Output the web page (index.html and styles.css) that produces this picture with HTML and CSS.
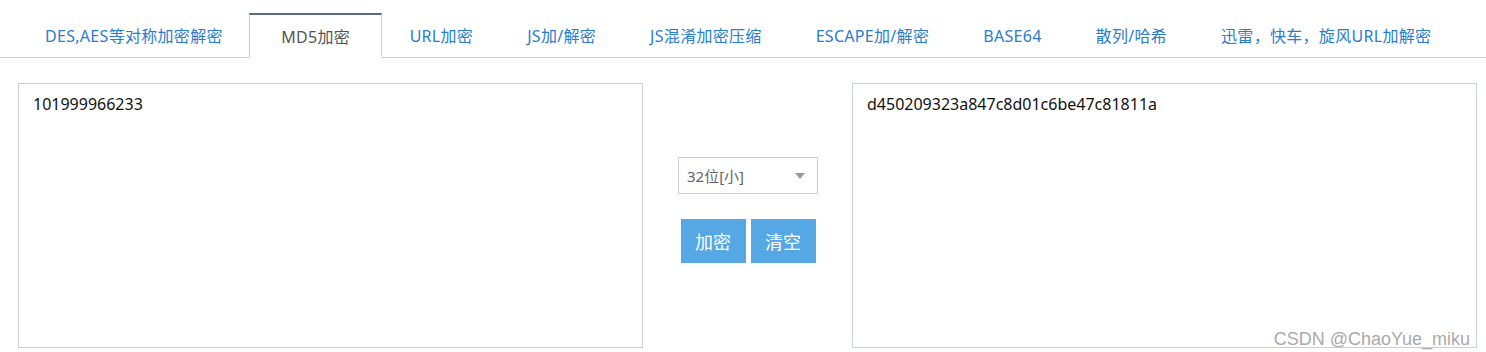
FILE: index.html
```html
<!DOCTYPE html>
<html lang="zh-CN">
<head>
    <meta charset="UTF-8">
    <meta name="viewport" content="width=device-width, initial-scale=1.0">
    <title>MD5加密</title>
    <link rel="stylesheet" href="styles.css">
</head>
<body>
    <ul class="tabs">
        <li><a href="#">DES,AES等对称加密解密</a></li>
        <li class="active"><a href="#">MD5加密</a></li>
        <li><a href="#">URL加密</a></li>
        <li><a href="#">JS加/解密</a></li>
        <li><a href="#">JS混淆加密压缩</a></li>
        <li><a href="#">ESCAPE加/解密</a></li>
        <li><a href="#">BASE64</a></li>
        <li><a href="#">散列/哈希</a></li>
        <li><a href="#">迅雷，快车，旋风URL加解密</a></li>
    </ul>

    <div class="tool">
        <textarea class="box" id="source">101999966233</textarea>
        <div class="middle">
            <div class="select-wrap">
                <select id="bits">
                    <option>32位[小]</option>
                    <option>32位[大]</option>
                    <option>16位[小]</option>
                    <option>16位[大]</option>
                </select>
            </div>
            <div class="buttons">
                <button>加密</button>
                <button>清空</button>
            </div>
        </div>
        <textarea class="box" id="result">d450209323a847c8d01c6be47c81811a</textarea>
    </div>

    <div class="watermark">CSDN @ChaoYue_miku</div>
</body>
</html>
```

FILE: styles.css
```css
body {
    margin: 0;
    padding-top: 13px;
    font-family: "Noto Sans", "Noto Sans CJK SC", sans-serif;
    font-size: 16px;
    color: #333;
    background-color: #fff;
    position: relative;
    height: 339px;
    overflow: hidden;
}
.tabs {
    list-style: none;
    margin: 0;
    padding: 0 0 0 17.5px;
    display: flex;
    border-bottom: 1px solid #c8cfdb;
    height: 44px;
}
.tabs li {
    height: 44px;
    margin-bottom: -1px;
}
.tabs a {
    display: block;
    padding: 0 26.5px 0 27.5px;
    line-height: 46px;
    letter-spacing: 0.3px;
    color: #2a7ccf;
    text-decoration: none;
}
.tabs li.active {
    border: 1px solid #c8cfdb;
    border-top: 2px solid #5b6a84;
    border-bottom: 1px solid #fff;
    background-color: #fff;
    height: 42px;
}
.tabs li.active a {
    color: #555;
    padding: 0 31px;
    line-height: 44px;
}
.tool {
    display: flex;
    margin-top: 25px;
    padding-left: 18px;
}
.box {
    width: 625px;
    height: 265px;
    box-sizing: border-box;
    border: 1px solid #c8cfdb;
    padding: 8px 14px;
    margin: 0;
    font-family: "Noto Sans", "Noto Sans CJK SC", sans-serif;
    font-size: 16px;
    line-height: 24px;
    color: #111;
    resize: none;
    outline: none;
}
.middle {
    width: 209px;
    display: flex;
    flex-direction: column;
    align-items: center;
    padding-top: 74px;
    padding-left: 1px;
    box-sizing: border-box;
}
.select-wrap {
    position: relative;
    width: 140px;
    height: 37px;
}
.select-wrap select {
    appearance: none;
    width: 100%;
    height: 100%;
    border: 1px solid #c8cfdb;
    background-color: #fff;
    padding: 0 8px;
    font-family: "Noto Sans", "Noto Sans CJK SC", sans-serif;
    font-size: 15px;
    color: #666;
    border-radius: 0;
    outline: none;
}
.select-wrap::after {
    content: "";
    position: absolute;
    right: 13px;
    top: 16px;
    border-left: 5px solid transparent;
    border-right: 5px solid transparent;
    border-top: 6px solid #999;
}
.buttons {
    display: flex;
    gap: 5px;
    margin-top: 25px;
}
.buttons button {
    width: 65px;
    height: 44px;
    border: none;
    background-color: #55a8e4;
    color: #fff;
    font-family: "Noto Sans CJK SC", sans-serif;
    font-size: 18px;
    padding: 0;
    cursor: pointer;
}
.buttons button:hover {
    background-color: #3f97d8;
}
.watermark {
    position: absolute;
    right: 16px;
    bottom: 2px;
    font-family: "Liberation Sans", Arial, sans-serif;
    font-size: 18px;
    color: #aaa;
}
```
